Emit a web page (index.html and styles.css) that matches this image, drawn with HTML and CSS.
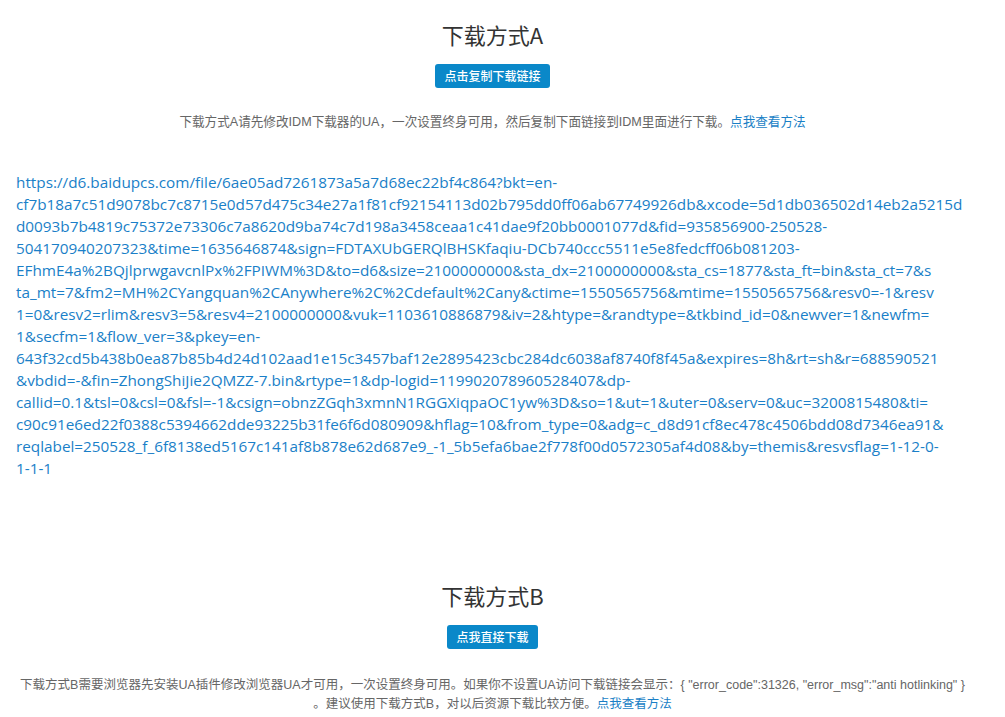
FILE: index.html
```html
<!DOCTYPE html>
<html lang="zh-CN">
<head>
<meta charset="utf-8">
<title>下载方式</title>
<link rel="stylesheet" href="styles.css">
</head>
<body>
<div class="page">
  <section class="method method-a">
    <h2 class="title">下载方式A</h2>
    <button class="btn btn-copy">点击复制下载链接</button>
    <p class="desc">下载方式A请先修改IDM下载器的UA，一次设置终身可用，然后复制下面链接到IDM里面进行下载。<a class="link" href="#">点我查看方法</a></p>
    <div class="url">https://d6.baidupcs.com/file/6ae05ad7261873a5a7d68ec22bf4c864?bkt=en-<br>cf7b18a7c51d9078bc7c8715e0d57d475c34e27a1f81cf92154113d02b795dd0ff06ab67749926db&amp;xcode=5d1db036502d14eb2a5215d<br>d0093b7b4819c75372e73306c7a8620d9ba74c7d198a3458ceaa1c41dae9f20bb0001077d&amp;fid=935856900-250528-<br>504170940207323&amp;time=1635646874&amp;sign=FDTAXUbGERQlBHSKfaqiu-DCb740ccc5511e5e8fedcff06b081203-<br>EFhmE4a%2BQjlprwgavcnlPx%2FPIWM%3D&amp;to=d6&amp;size=2100000000&amp;sta_dx=2100000000&amp;sta_cs=1877&amp;sta_ft=bin&amp;sta_ct=7&amp;s<br>ta_mt=7&amp;fm2=MH%2CYangquan%2CAnywhere%2C%2Cdefault%2Cany&amp;ctime=1550565756&amp;mtime=1550565756&amp;resv0=-1&amp;resv<br>1=0&amp;resv2=rlim&amp;resv3=5&amp;resv4=2100000000&amp;vuk=1103610886879&amp;iv=2&amp;htype=&amp;randtype=&amp;tkbind_id=0&amp;newver=1&amp;newfm=<br>1&amp;secfm=1&amp;flow_ver=3&amp;pkey=en-<br>643f32cd5b438b0ea87b85b4d24d102aad1e15c3457baf12e2895423cbc284dc6038af8740f8f45a&amp;expires=8h&amp;rt=sh&amp;r=688590521<br>&amp;vbdid=-&amp;fin=ZhongShiJie2QMZZ-7.bin&amp;rtype=1&amp;dp-logid=119902078960528407&amp;dp-<br>callid=0.1&amp;tsl=0&amp;csl=0&amp;fsl=-1&amp;csign=obnzZGqh3xmnN1RGGXiqpaOC1yw%3D&amp;so=1&amp;ut=1&amp;uter=0&amp;serv=0&amp;uc=3200815480&amp;ti=<br>c90c91e6ed22f0388c5394662dde93225b31fe6f6d080909&amp;hflag=10&amp;from_type=0&amp;adg=c_d8d91cf8ec478c4506bdd08d7346ea91&amp;<br>reqlabel=250528_f_6f8138ed5167c141af8b878e62d687e9_-1_5b5efa6bae2f778f00d0572305af4d08&amp;by=themis&amp;resvsflag=1-12-0-<br>1-1-1</div>
  </section>
  <section class="method method-b">
    <h2 class="title">下载方式B</h2>
    <button class="btn btn-direct">点我直接下载</button>
    <p class="desc desc-b">下载方式B需要浏览器先安装UA插件修改浏览器UA才可用，一次设置终身可用。如果你不设置UA访问下载链接会显示：{ "error_code":31326, "error_msg":"anti hotlinking" }<br>。建议使用下载方式B，对以后资源下载比较方便。<a class="link" href="#">点我查看方法</a></p>
  </section>
</div>
</body>
</html>
```

FILE: styles.css
```css
html, body {
  margin: 0;
  padding: 0;
  background: #ffffff;
}
body {
  font-family: "Noto Sans CJK SC", "Open Sans", sans-serif;
  color: #333333;
}
.page {
  padding: 19px 36px 0 16px;
}
.method {
  display: flex;
  flex-direction: column;
  align-items: center;
  text-align: center;
}
.title {
  margin: 0;
  font-size: 22px;
  line-height: 30px;
  font-weight: 400;
  color: #333333;
}
.btn {
  margin-top: 15px;
  height: 24px;
  padding: 0 9px;
  border: 0;
  border-radius: 3px;
  background: #0a88c9;
  color: #ffffff;
  font-family: "Noto Sans CJK SC", sans-serif;
  font-size: 12px;
  line-height: 24px;
  font-weight: 500;
  cursor: pointer;
}
.desc {
  margin: 24px 0 0;
  font-family: "Liberation Sans", "Noto Sans CJK SC", sans-serif;
  font-size: 12.6px;
  line-height: 20px;
  color: #666666;
}
.link {
  color: #1a7fc6;
  text-decoration: none;
}
.url {
  align-self: stretch;
  margin-top: 39px;
  text-align: left;
  font-family: "Open Sans", sans-serif;
  font-size: 15.3px;
  line-height: 22px;
  color: #1a7fc8;
  white-space: nowrap;
}
.method-b {
  margin-top: 101px;
}
.desc-b {
  margin-top: 27px;
  font-size: 12.5px;
  line-height: 19px;
}
```
